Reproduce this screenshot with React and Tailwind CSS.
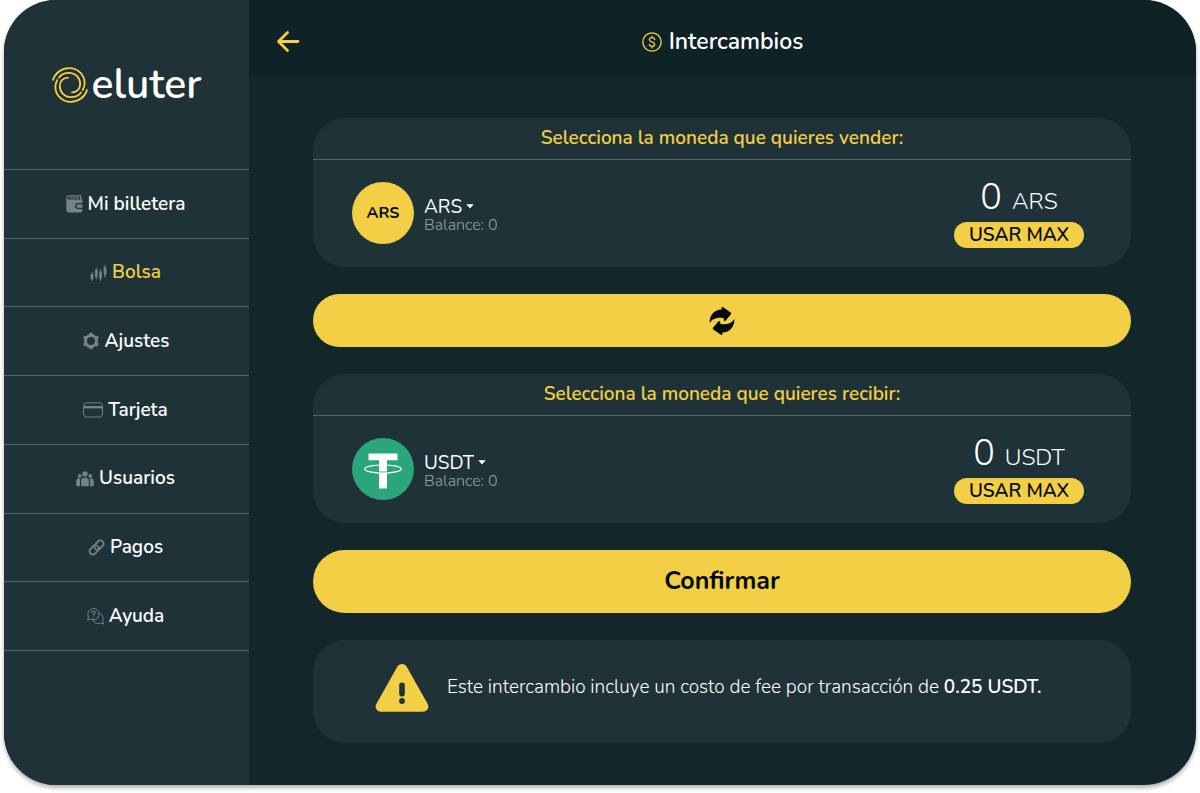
import React, { useState } from "react";

function Logo() {
  return (
    <svg viewBox="0 0 36 36" className="size-9 shrink-0" fill="none" stroke="#f3cf45" strokeWidth="1.8" strokeLinecap="round" aria-hidden="true">
      <path d="M1.100 12.800C3 6 9.500 1.200 17.200 1.200 26 1.200 32.800 8 32.600 16.500c-.1 2.500-.7 4.500-1.900 6.500" />
      <path d="M7 10.500C9 7.600 12.800 5.800 17 5.800c6.500 0 11.200 5 11.200 11.200 0 5-3.700 8.300-8.200 8.300" />
      <g transform="rotate(180 18 18)">
        <path d="M1.100 12.800C3 6 9.500 1.200 17.200 1.200 26 1.200 32.800 8 32.600 16.500c-.1 2.500-.7 4.500-1.900 6.500" />
        <path d="M7 10.500C9 7.600 12.800 5.800 17 5.800c6.500 0 11.200 5 11.200 11.200 0 5-3.700 8.300-8.200 8.300" />
      </g>
    </svg>
  );
}

function WalletIcon() {
  return (
    <svg viewBox="0 0 17 18" className="h-[18px] w-[17px]" aria-hidden="true">
      <path fill="currentColor" fillRule="evenodd" d="M2.700.3H14c1 0 1.500.6 1.500 1.500v2.700c.6.200.9.600.9 1.200V8h-4.200C10.300 8 9 9.200 9 11s1.300 3 3.200 3h4.200v1.500c0 1.200-.8 2-2 2H2.500c-1.300 0-2.200-.9-2.200-2.200V2.700C.3 1.300 1.300.3 2.700.3ZM2.800 1.600a1.200 1.200 0 0 0 0 2.900h11.300V2.200c0-.4-.2-.6-.6-.6Z" />
      <path fill="currentColor" d="M3.500 2.600H13v.9H3.500zM12.200 9.200h4.200v3.600h-4.200a1.800 1.800 0 0 1 0-3.600Z" />
    </svg>
  );
}

function CandlesIcon() {
  return (
    <svg viewBox="0 0 17 16" className="h-4 w-[17px]" stroke="currentColor" strokeLinecap="round" aria-hidden="true">
      <path strokeWidth="1" d="M2 7.500v8M6.300 3v11M10.500 4.500v11M15 .5v12" />
      <path strokeWidth="2.800" d="M2 9.800v3.400M6.300 5.800V11M10.500 8v4.800M15 3.300v5.200" />
    </svg>
  );
}

function GearIcon() {
  return (
    <svg viewBox="0 0 18 18" className="size-[18px]" fill="none" stroke="currentColor" aria-hidden="true">
      <circle cx="9" cy="9" r="5.500" strokeWidth="2.900" />
      <g strokeWidth="4" strokeLinecap="round">
        <path d="M9 2.500v.1" />
        <path d="M9 2.500v.1" transform="rotate(60 9 9)" />
        <path d="M9 2.500v.1" transform="rotate(120 9 9)" />
        <path d="M9 2.500v.1" transform="rotate(180 9 9)" />
        <path d="M9 2.500v.1" transform="rotate(240 9 9)" />
        <path d="M9 2.500v.1" transform="rotate(300 9 9)" />
      </g>
    </svg>
  );
}

function CardIcon() {
  return (
    <svg viewBox="0 0 20 16" className="h-4 w-5" fill="none" stroke="currentColor" aria-hidden="true">
      <rect x=".6" y=".8" width="18.800" height="14.200" rx="2.800" strokeWidth="1" />
      <path strokeWidth="2.400" d="M.6 5.200h18.800" />
    </svg>
  );
}

function UsersIcon() {
  return (
    <svg viewBox="0 0 18 16" className="h-4 w-[18px]" fill="currentColor" aria-hidden="true">
      <circle cx="9" cy="3" r="2.700" />
      <circle cx="3.700" cy="5" r="1.900" />
      <circle cx="14.300" cy="5" r="1.900" />
      <path d="M5.200 15.300V9.200c0-1.500 1-2.400 2.400-2.400h2.800c1.400 0 2.400.9 2.400 2.400v6.100ZM.5 15c-.3-.3-.3-5-.2-5.500.2-1.300 1-1.900 2.300-1.900h1.700c-.3.600-.3 1-.3 1.700v6H1.500c-.5 0-.8-.1-1-.3ZM17.500 15c.3-.3.3-5 .2-5.500-.2-1.300-1-1.900-2.300-1.900h-1.700c.3.600.3 1 .3 1.700v6h2.500c.5 0 .8-.1 1-.3Z" />
    </svg>
  );
}

function LinkIcon() {
  return (
    <svg viewBox="0 0 24 24" className="size-[17px]" fill="none" stroke="currentColor" strokeWidth="2.500" strokeLinecap="round" aria-hidden="true">
      <path d="M10.200 13.800a4.500 4.500 0 0 1 0-6.300l3.900-4a4.500 4.500 0 0 1 6.400 6.400l-3.900 3.900a4.500 4.500 0 0 1-4 1.200" />
      <path d="M13.800 10.200a4.500 4.500 0 0 1 0 6.300l-3.900 4a4.500 4.500 0 0 1-6.400-6.400l3.900-3.900a4.500 4.500 0 0 1 4-1.200" />
    </svg>
  );
}

function HelpIcon() {
  return (
    <svg viewBox="0 0 17 17" className="size-[17px]" fill="none" stroke="currentColor" strokeWidth="1" strokeLinecap="round" strokeLinejoin="round" aria-hidden="true">
      <path d="M.7 11.500 1.500 9A5.700 5.700 0 1 1 3.700 11.200Z" />
      <path d="M12.500 5.300a5.300 5.300 0 0 1 3.200 7.600l.7 3.100-3-.8a5.200 5.200 0 0 1-7.300-3" />
      <path strokeWidth="1.200" d="M4.900 4.700c0-2.300 3.200-2.200 3.200-.2 0 1.300-1.600 1.200-1.600 2.700M6.500 9.100v.1" />
    </svg>
  );
}

function CoinIcon() {
  return (
    <svg viewBox="0 0 20 20" className="size-5" fill="none" stroke="#f3cf45" strokeWidth="1.300" strokeLinecap="round" aria-hidden="true">
      <circle cx="10" cy="10" r="9.200" />
      <path d="M12.600 7.600c0-1.300-1.100-2-2.600-2s-2.600.7-2.600 2.100c0 3 5.200 1.500 5.200 4.500 0 1.400-1.100 2.200-2.600 2.200s-2.600-.8-2.600-2.100M10 4.200v1.400M10 14.400v1.400" />
    </svg>
  );
}

function SwapIcon() {
  return (
    <svg viewBox="0 0 26 28" className="h-7 w-[26px]" fill="#050a0b" aria-hidden="true">
      <path d="M.6 16C.4 8.500 4.800 2.800 12.600 2.500V1c0-.8.8-1.200 1.500-.8l7.600 5.400c.6.400.7 1 .3 1.600l-5.500 6.500c-.6.600-1.500.4-1.600-.4l-.3-2.300C9 10.200 3.800 11 .6 16Z" />
      <path transform="rotate(180 13 14)" d="M.6 16C.4 8.500 4.800 2.800 12.600 2.500V1c0-.8.8-1.200 1.500-.8l7.600 5.400c.6.400.7 1 .3 1.600l-5.500 6.500c-.6.600-1.500.4-1.600-.4l-.3-2.300C9 10.200 3.800 11 .6 16Z" />
    </svg>
  );
}

function TetherIcon() {
  return (
    <svg viewBox="0 0 62 62" className="size-[62px] shrink-0" aria-hidden="true">
      <circle cx="31" cy="31" r="31" fill="#2aa57c" />
      <path fill="#fff" d="M16.500 15.500h29v6.800H35v28.200h-8V22.300H16.500Z" />
      <ellipse cx="31" cy="31" rx="18.300" ry="4" fill="none" stroke="#fff" strokeWidth="1.200" />
      <path d="M26 33.800c3.500.3 6.500.3 10 0" fill="none" stroke="#2aa57c" strokeWidth=".8" />
    </svg>
  );
}

function WarningIcon() {
  return (
    <svg viewBox="0 0 54 48" className="h-12 w-[54px] shrink-0" aria-hidden="true">
      <path fill="#f3cf45" d="M22.300 2.700c2-3.600 7.400-3.600 9.400 0l21 37.300c2 3.600-.5 7.700-4.700 7.700H6C1.800 47.700-.7 43.600 1.300 40Z" />
      <rect x="24.200" y="18.500" width="5.600" height="14" rx="2.800" fill="#1f3237" />
      <circle cx="27" cy="37" r="2.900" fill="#1f3237" />
    </svg>
  );
}

const navItems = [
  { label: "Mi billetera", Icon: WalletIcon },
  { label: "Bolsa", Icon: CandlesIcon, active: true },
  { label: "Ajustes", Icon: GearIcon },
  { label: "Tarjeta", Icon: CardIcon },
  { label: "Usuarios", Icon: UsersIcon },
  { label: "Pagos", Icon: LinkIcon },
  { label: "Ayuda", Icon: HelpIcon },
];

function CoinBadge({ coin }) {
  if (coin === "USDT") return <TetherIcon />;
  return (
    <span className="flex size-[62px] shrink-0 items-center justify-center rounded-full bg-[#f3cf45] text-base font-bold text-[#050a0b]">
      ARS
    </span>
  );
}

function CoinPanel({ id, title, initial }) {
  const [coin, setCoin] = useState(initial);
  const [amount, setAmount] = useState("0");
  return (
    <section className="rounded-[32px] bg-[#1f3237]">
      <h2 className="border-b border-[#53666a] text-center text-[19px] leading-[41px] font-[650] text-[#f3cf45]">{title}</h2>
      <div className="flex h-[107px] items-center justify-between pr-[47px] pb-[2px] pl-[39px]">
        <div className="flex items-center gap-[10px]">
          <CoinBadge coin={coin} />
          <div className="pt-1">
            <div className="flex items-center gap-1">
              <select
                id={`${id}-coin`}
                aria-label={title}
                value={coin}
                onChange={(e) => setCoin(e.target.value)}
                className="block appearance-none bg-transparent text-[19px] leading-5 text-white [field-sizing:content]"
              >
                <option>ARS</option>
                <option>USDT</option>
              </select>
              <svg viewBox="0 0 8 5" className="h-[5px] w-2" fill="#fff" aria-hidden="true">
                <path d="M.3.300h7.400L4 4.600Z" />
              </svg>
            </div>
            <p className="text-base leading-4 font-light text-[#98a3a5]">Balance: 0</p>
          </div>
        </div>
        <div className="flex w-[130px] flex-col items-center">
          <label className="flex items-baseline gap-[10px] text-white">
            <input
              id={`${id}-amount`}
              inputMode="decimal"
              value={amount}
              onChange={(e) => setAmount(e.target.value)}
              className="bg-transparent text-center text-4xl leading-10 font-[350] [field-sizing:content]"
            />
            <span className="text-[23px] leading-10 font-[350]">{coin}</span>
          </label>
          <button type="button" className="h-[26px] w-full rounded-full bg-[#f3cf45] text-[19px] leading-[26px] font-[650] text-[#050a0b]">
            USAR MAX
          </button>
        </div>
      </div>
    </section>
  );
}

export default function App() {
  return (
    <div className="bg-white px-1 pb-2 font-['Nunito','Lato',sans-serif]">
      <div className="flex min-h-[785px] overflow-hidden rounded-[52px] bg-[#13272b] shadow-[0_3px_4px_rgba(0,0,0,0.3)]">
        <aside className="w-[245px] shrink-0 bg-[#1f3237]">
          <a href="#inicio" className="flex h-[169px] items-center justify-center gap-1 text-white" aria-label="eluter">
            <Logo />
            <span className="text-[41px] leading-none font-semibold">eluter</span>
          </a>
          <nav className="flex h-[482px] flex-col border-t border-[#53666a]">
            {navItems.map(({ label, Icon, active }) => (
              <a
                key={label}
                href={`#${label.toLowerCase().replace(" ", "-")}`}
                aria-current={active ? "page" : undefined}
                className={
                  active
                    ? "flex flex-1 items-center justify-center gap-[5px] border-b border-[#53666a] pr-[2px] text-[19px] font-[650] text-[#f3cf45]"
                    : "flex flex-1 items-center justify-center gap-[5px] border-b border-[#53666a] pr-[2px] text-[19px] font-[650] text-white"
                }
              >
                <span className="text-[#748386]">
                  <Icon />
                </span>
                {label}
              </a>
            ))}
          </nav>
        </aside>
        <main className="min-w-0 flex-1">
          <header className="grid h-[76px] grid-cols-[1fr_auto_1fr] items-center bg-[#0f2226] px-7 pt-2">
            <button type="button" aria-label="Volver" className="w-fit">
              <svg viewBox="0 0 24 24" className="size-6" fill="none" stroke="#f3cf45" strokeWidth="2.800" strokeLinecap="round" strokeLinejoin="round" aria-hidden="true">
                <path d="M10.500 2.500 1.500 11.500l9 9M2 11.500H21" />
              </svg>
            </button>
            <h1 className="flex items-center gap-[7px] text-[23px] font-[650] text-white">
              <CoinIcon />
              Intercambios
            </h1>
          </header>
          <div className="flex flex-col gap-[27px] py-[42px] pr-[65px] pl-16">
            <CoinPanel id="vender" title="Selecciona la moneda que quieres vender:" initial="ARS" />
            <button type="button" aria-label="Intercambiar monedas" className="flex h-[53px] items-center justify-center rounded-full bg-[#f3cf45]">
              <SwapIcon />
            </button>
            <CoinPanel id="recibir" title="Selecciona la moneda que quieres recibir:" initial="USDT" />
            <button type="button" className="h-[63px] rounded-full bg-[#f3cf45] text-[25px] font-bold text-[#050a0b]">
              Confirmar
            </button>
            <section className="flex h-[103px] items-center gap-[18px] rounded-[32px] bg-[#1f3237] px-[62px] pb-2 text-[19px] text-white">
              <WarningIcon />
              <p className="font-[350]">
                Este intercambio incluye un costo de fee por transacción de <strong className="font-[650]">0.25 USDT.</strong>
              </p>
            </section>
          </div>
        </main>
      </div>
    </div>
  );
}
